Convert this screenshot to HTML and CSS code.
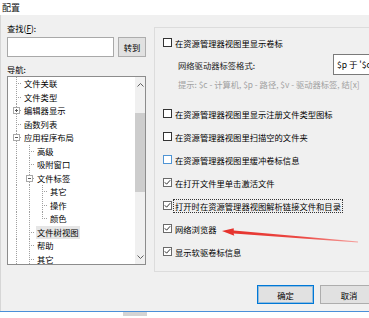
FILE: index.html
```html
<!DOCTYPE html>
<html lang="zh-CN">
<head>
<meta charset="utf-8">
<title>配置</title>
<link rel="stylesheet" href="styles.css">
</head>
<body>
<div class="window">
  <div class="titlebar">配置</div>
  <div class="content">
    <div class="left">
      <div class="label find">查找(<u>F</u>):</div>
      <div class="search-row">
        <div class="input"></div>
        <div class="btn go">转到</div>
      </div>
      <div class="label nav">导航:</div>
      <div class="tree">
        <div class="tree-items">
          <div class="row"><span class="g t"></span><span class="txt">文件关联</span></div>
          <div class="row"><span class="g t"></span><span class="txt">文件类型</span></div>
          <div class="row"><span class="g t"><span class="exp plus"></span></span><span class="txt">编辑器显示</span></div>
          <div class="row"><span class="g t"></span><span class="txt">函数列表</span></div>
          <div class="row"><span class="g t"><span class="exp"></span></span><span class="txt">应用程序布局</span></div>
          <div class="row"><span class="g v"></span><span class="g t"></span><span class="txt">高级</span></div>
          <div class="row"><span class="g v"></span><span class="g t"></span><span class="txt">吸附窗口</span></div>
          <div class="row"><span class="g v"></span><span class="g t"><span class="exp"></span></span><span class="txt">文件标签</span></div>
          <div class="row"><span class="g v"></span><span class="g v"></span><span class="g t"></span><span class="txt">其它</span></div>
          <div class="row"><span class="g v"></span><span class="g v"></span><span class="g t"></span><span class="txt">操作</span></div>
          <div class="row"><span class="g v"></span><span class="g v"></span><span class="g l"></span><span class="txt">颜色</span></div>
          <div class="row"><span class="g v"></span><span class="g t"></span><span class="txt selected">文件树视图</span></div>
          <div class="row"><span class="g v"></span><span class="g t"></span><span class="txt">帮助</span></div>
          <div class="row"><span class="g v"></span><span class="g t"></span><span class="txt">其它</span></div>
        </div>
        <div class="scrollbar">
          <div class="arrow"><svg width="7" height="4" viewBox="0 0 7 4"><polyline points="0.5,3.5 3.5,0.5 6.5,3.5" fill="none" stroke="#606060" stroke-width="1"/></svg></div>
          <div class="track"><div class="thumb"></div></div>
          <div class="arrow"><svg width="7" height="4" viewBox="0 0 7 4"><polyline points="0.5,0.5 3.5,3.5 6.5,0.5" fill="none" stroke="#606060" stroke-width="1"/></svg></div>
        </div>
      </div>
    </div>
    <div class="right">
      <div class="group">
        <div class="opt first"><span class="cb"></span><span class="otxt">在资源管理器视图里显示卷标</span></div>
        <div class="fmt-row"><span class="fmt-label">网络驱动器标签格式:</span><div class="fmt-input">$p 于 '$c</div></div>
        <div class="hint">提示: $c - 计算机, $p - 路径, $v - 驱动器标签, 结[x]</div>
        <div class="opts">
          <div class="opt"><span class="cb"></span><span class="otxt">在资源管理器视图里显示注册文件类型图标</span></div>
          <div class="opt"><span class="cb"></span><span class="otxt">在资源管理器视图里扫描空的文件夹</span></div>
          <div class="opt"><span class="cb hover"></span><span class="otxt">在资源管理器视图里缓冲卷标信息</span></div>
          <div class="opt"><span class="cb checked"><svg width="7" height="7" viewBox="0 0 7 7"><polyline points="0.8,3.3 2.6,5.2 6.2,1.2" fill="none" stroke="#333" stroke-width="1"/></svg></span><span class="otxt">在打开文件里单击激活文件</span></div>
          <div class="opt"><span class="cb checked"><svg width="7" height="7" viewBox="0 0 7 7"><polyline points="0.8,3.3 2.6,5.2 6.2,1.2" fill="none" stroke="#333" stroke-width="1"/></svg></span><span class="otxt focus">打开时在资源管理器视图解析链接文件和目录</span></div>
          <div class="opt"><span class="cb checked"><svg width="7" height="7" viewBox="0 0 7 7"><polyline points="0.8,3.3 2.6,5.2 6.2,1.2" fill="none" stroke="#333" stroke-width="1"/></svg></span><span class="otxt">网络浏览器</span></div>
          <div class="opt"><span class="cb checked"><svg width="7" height="7" viewBox="0 0 7 7"><polyline points="0.8,3.3 2.6,5.2 6.2,1.2" fill="none" stroke="#333" stroke-width="1"/></svg></span><span class="otxt">显示软驱卷标信息</span></div>
        </div>
      </div>
      <div class="buttons">
        <div class="btn default">确定</div>
        <div class="btn cancel">取消</div>
      </div>
    </div>
  </div>
  <div class="taskbar"><span class="chip"></span></div>
  <svg class="annot" width="369" height="318" viewBox="0 0 369 318">
    <defs>
      <linearGradient id="ag" x1="222" y1="0" x2="358" y2="0" gradientUnits="userSpaceOnUse">
        <stop offset="0" stop-color="#e5302b"/>
        <stop offset="0.6" stop-color="#ec4a45"/>
        <stop offset="1" stop-color="#f6a3a0"/>
      </linearGradient>
    </defs>
    <polygon fill="url(#ag)" points="222,231 233.7,228.2 233.8,230.6 358,241.6 358,242.4 233.6,233.4 234.3,235.7"/>
  </svg>
</div>
</body>
</html>
```

FILE: styles.css
```css
* { box-sizing: border-box; }
html, body { margin: 0; padding: 0; }
body {
  width: 369px;
  height: 318px;
  overflow: hidden;
  background: #ffffff;
  font-family: "Noto Sans CJK SC", "Noto Sans", sans-serif;
  font-size: 8.3px;
  color: #000;
}
.window {
  position: relative;
  width: 369px;
  height: 318px;
  display: flex;
  flex-direction: column;
  overflow: hidden;
}
.titlebar {
  height: 15px;
  line-height: 15px;
  padding-left: 2px;
  background: #ffffff;
  font-size: 9px;
  color: #111;
}
.content {
  height: 296px;
  background: #f0f0f0;
  display: flex;
  gap: 8px;
  padding-left: 6px;
  border-left: 1px solid #d6d6d6;
}
.left {
  width: 139px;
  display: flex;
  flex-direction: column;
}
.label {
  height: 14px;
  line-height: 14px;
}
.label.find { margin-top: 6px; }
.label.nav { margin-top: 5px; }
.search-row {
  margin-top: 2px;
  height: 20px;
  display: flex;
  gap: 4px;
}
.input {
  width: 107px;
  height: 20px;
  background: #fff;
  border: 1px solid #a9a9a9;
}
.btn {
  display: flex;
  align-items: center;
  justify-content: center;
  background: #e1e1e1;
  border: 1px solid #adadad;
  color: #000;
}
.btn.go { width: 28px; height: 20px; }
.tree {
  height: 189px;
  background: #fff;
  border: 1px solid #8c8c8c;
  display: flex;
}
.tree-items {
  flex: 1;
  overflow: hidden;
}
.row {
  height: 13.5px;
  display: flex;
  align-items: stretch;
  white-space: nowrap;
}
.g {
  width: 13px;
  flex: none;
  display: flex;
  align-items: center;
}
.g.v {
  background: repeating-linear-gradient(to bottom, #a0a0a0 0 1px, transparent 1px 2px) 8px 0 / 1px 100% no-repeat;
}
.g.t {
  background:
    repeating-linear-gradient(to bottom, #a0a0a0 0 1px, transparent 1px 2px) 8px 0 / 1px 100% no-repeat,
    repeating-linear-gradient(to right, #a0a0a0 0 1px, transparent 1px 2px) 10px 6px / 4px 1px no-repeat;
}
.g.l {
  background:
    repeating-linear-gradient(to bottom, #a0a0a0 0 1px, transparent 1px 2px) 8px 0 / 1px 7px no-repeat,
    repeating-linear-gradient(to right, #a0a0a0 0 1px, transparent 1px 2px) 10px 6px / 4px 1px no-repeat;
}
.exp {
  width: 7px;
  height: 7px;
  margin-left: 5px;
  background:
    linear-gradient(#5a5a5a, #5a5a5a) center / 3px 1px no-repeat,
    #fff;
  border: 1px solid #a8a8a8;
}
.exp.plus {
  background:
    linear-gradient(#5a5a5a, #5a5a5a) center / 3px 1px no-repeat,
    linear-gradient(#5a5a5a, #5a5a5a) center / 1px 3px no-repeat,
    #fff;
}
.txt {
  margin-left: 3px;
  line-height: 13.5px;
}
.txt.selected {
  margin-left: 2px;
  padding: 0 1px;
  background: #e6e6e6;
}
.scrollbar {
  width: 10px;
  flex: none;
  background: #f0f0f0;
  display: flex;
  flex-direction: column;
}
.arrow {
  height: 15px;
  display: flex;
  align-items: center;
  justify-content: center;
}
.track { flex: 1; }
.thumb {
  margin-top: 21px;
  height: 79px;
  background: #cdcdcd;
}
.right {
  flex: 1;
  display: flex;
  flex-direction: column;
}
.group {
  margin-top: 12px;
  margin-right: -30px;
  height: 245px;
  border: 1px solid #dcdcdc;
  padding: 3px 0 8px 8px;
  white-space: nowrap;
}
.opt {
  height: 23px;
  display: flex;
  align-items: center;
}
.cb {
  width: 9px;
  height: 9px;
  flex: none;
  background: #fff;
  border: 1px solid #333;
  margin-right: 3px;
  display: flex;
  align-items: center;
  justify-content: center;
}
.cb.hover { border-color: #4f94d4; }
.cb.checked { border-color: #6a6a6a; }
.cb svg { display: block; }
.otxt { line-height: 12px; }
.otxt.focus {
  margin-left: -1px;
  padding: 0 1px;
  outline: 1px dotted #333;
}
.fmt-row {
  height: 22px;
  display: flex;
  align-items: center;
  padding-left: 15px;
}
.fmt-label {
  width: 155px;
  color: #222;
}
.fmt-input {
  align-self: flex-start;
  width: 80px;
  height: 21px;
  background: #fff;
  border: 1px solid #7a7a7a;
  padding-left: 3px;
  line-height: 19px;
  font-size: 8.5px;
}
.hint {
  height: 16px;
  line-height: 16px;
  padding-left: 15px;
  color: #a0a0a0;
}
.opts { margin-top: 10px; }
.buttons {
  margin-top: 13px;
  display: flex;
  justify-content: flex-end;
  gap: 6px;
  padding-right: 6px;
}
.buttons .btn { height: 19px; }
.btn.default {
  width: 57px;
  border-color: #0078d7;
  box-shadow: inset 0 0 0 1px rgba(0, 120, 215, 0.35);
}
.btn.cancel { width: 58px; }
.taskbar {
  flex: 1;
  background: #ffffff;
  border-top: 1px solid #4a8fd8;
  padding-left: 123px;
}
.chip {
  display: block;
  width: 24px;
  height: 4px;
  background: #d4d4d4;
}
.annot {
  position: absolute;
  left: 0;
  top: 0;
  pointer-events: none;
}
```
